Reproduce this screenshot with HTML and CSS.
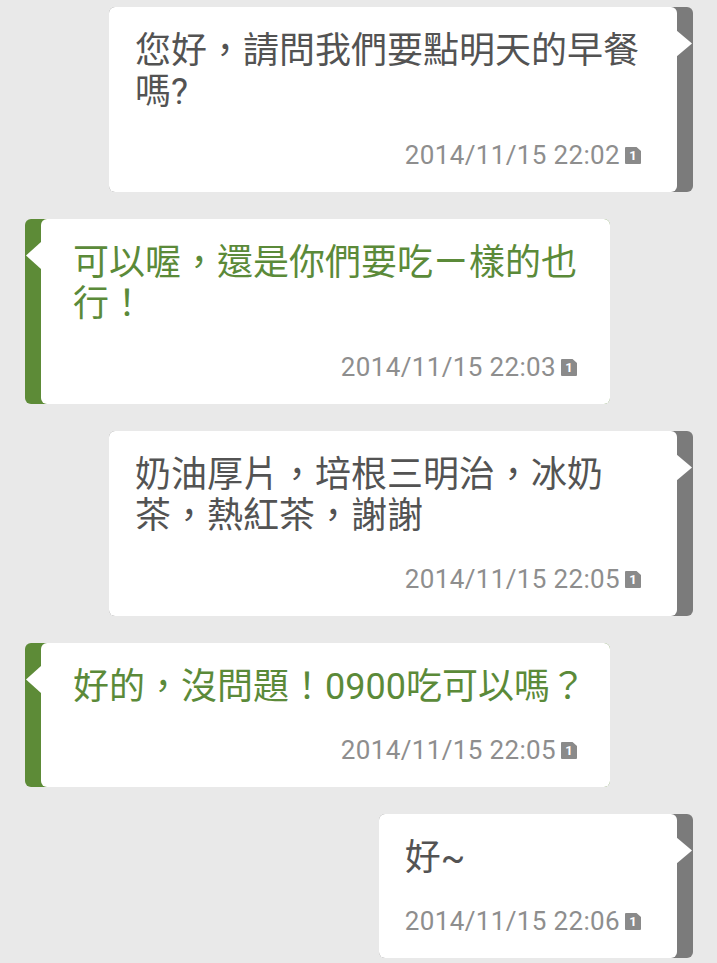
FILE: index.html
```
<!DOCTYPE html>
<html lang="zh-Hant">
<head>
<meta charset="utf-8">
<title>Chat</title>
<link rel="stylesheet" href="styles.css">
</head>
<body>
<div class="chat">
  <div class="bubble out">
    <div class="body">
      <div class="text">您好，請問我們要點明天的早餐嗎?</div>
      <div class="meta"><span class="time">2014/11/15 22:02</span><span class="badge">1</span></div>
    </div>
  </div>
  <div class="bubble in">
    <div class="body">
      <div class="text">可以喔，還是你們要吃ㄧ樣的也行！</div>
      <div class="meta"><span class="time">2014/11/15 22:03</span><span class="badge">1</span></div>
    </div>
  </div>
  <div class="bubble out">
    <div class="body">
      <div class="text">奶油厚片，培根三明治，冰奶茶，熱紅茶，謝謝</div>
      <div class="meta"><span class="time">2014/11/15 22:05</span><span class="badge">1</span></div>
    </div>
  </div>
  <div class="bubble in">
    <div class="body">
      <div class="text single">好的，沒問題！0900吃可以嗎？</div>
      <div class="meta"><span class="time">2014/11/15 22:05</span><span class="badge">1</span></div>
    </div>
  </div>
  <div class="bubble out">
    <div class="body">
      <div class="text">好~</div>
      <div class="meta"><span class="time">2014/11/15 22:06</span><span class="badge">1</span></div>
    </div>
  </div>
</div>
</body>
</html>
```
FILE: styles.css
```
html, body {
  margin: 0;
  padding: 0;
  background: #e9e9e9;
}
body {
  font-family: Roboto, "Noto Sans CJK TC", sans-serif;
  width: 717px;
  height: 963px;
  overflow: hidden;
}
.chat {
  display: flex;
  flex-direction: column;
  gap: 27px;
  padding-top: 7px;
}
.bubble {
  position: relative;
  display: flex;
  border-radius: 6px;
  box-sizing: border-box;
}
.bubble.out {
  align-self: flex-end;
  margin-right: 24px;
  background: #7b7b7b;
  padding-right: 16px;
}
.bubble.in {
  align-self: flex-start;
  margin-left: 25px;
  background: #5d8b37;
  padding-left: 16px;
}
.bubble::after {
  content: "";
  position: absolute;
  top: 23px;
  height: 27px;
  width: 16px;
  background: #ffffff;
}
.bubble.out::after {
  right: 1px;
  clip-path: polygon(0 0, 100% 50%, 0 100%);
}
.bubble.in::after {
  left: 1px;
  width: 15px;
  clip-path: polygon(100% 0, 0 50%, 100% 100%);
}
.body {
  background: #ffffff;
  border-radius: 6px;
  box-sizing: border-box;
}
.out .body {
  padding: 24px 36px 22px 26px;
  max-width: 568px;
}
.in .body {
  padding: 24px 33px 22px 32px;
  max-width: 569px;
}
.text {
  font-size: 36px;
  line-height: 41px;
}
.text.single {
  white-space: nowrap;
}
.out .text {
  color: #535353;
}
.in .text {
  color: #5b8a39;
}
.meta {
  display: flex;
  justify-content: flex-end;
  align-items: center;
  gap: 5px;
  height: 30px;
  margin-top: 27px;
}
.time {
  font-size: 26px;
  letter-spacing: 0.35px;
  color: #8e8e8e;
  line-height: 30px;
}
.badge {
  flex: none;
  display: flex;
  align-items: center;
  justify-content: center;
  width: 16px;
  height: 17px;
  margin-top: 1px;
  background: #8a8a8a;
  color: #ffffff;
  font-family: Roboto, sans-serif;
  font-weight: 700;
  font-size: 13px;
  line-height: 1;
  border-radius: 1px;
  clip-path: polygon(0 0, 72% 0, 100% 24%, 100% 100%, 0 100%);
}
```
